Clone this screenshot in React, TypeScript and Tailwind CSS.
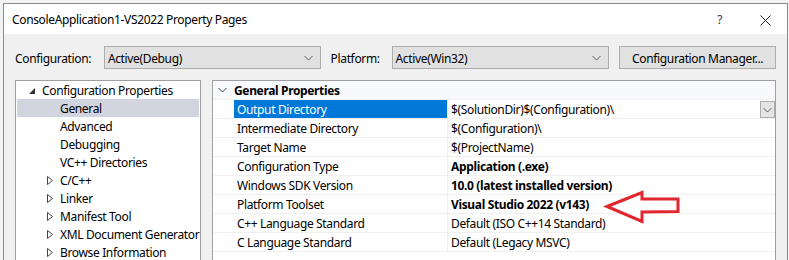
import React from "react";

const treeItems: { label: string; level: number; arrow?: "open" | "closed"; selected?: boolean }[] = [
  { label: "Configuration Properties", level: 0, arrow: "open" },
  { label: "General", level: 1, selected: true },
  { label: "Advanced", level: 1 },
  { label: "Debugging", level: 1 },
  { label: "VC++ Directories", level: 1 },
  { label: "C/C++", level: 1, arrow: "closed" },
  { label: "Linker", level: 1, arrow: "closed" },
  { label: "Manifest Tool", level: 1, arrow: "closed" },
  { label: "XML Document Generator", level: 1, arrow: "closed" },
  { label: "Browse Information", level: 1, arrow: "closed" },
];

const props: { name: string; value: string; bold?: boolean; selected?: boolean }[] = [
  { name: "Output Directory", value: "$(SolutionDir)$(Configuration)\\", selected: true },
  { name: "Intermediate Directory", value: "$(Configuration)\\" },
  { name: "Target Name", value: "$(ProjectName)" },
  { name: "Configuration Type", value: "Application (.exe)", bold: true },
  { name: "Windows SDK Version", value: "10.0 (latest installed version)", bold: true },
  { name: "Platform Toolset", value: "Visual Studio 2022 (v143)", bold: true },
  { name: "C++ Language Standard", value: "Default (ISO C++14 Standard)" },
  { name: "C Language Standard", value: "Default (Legacy MSVC)" },
];

const Chevron = ({ className = "" }: { className?: string }) => (
  <svg width="9" height="6" viewBox="0 0 9 6" className={className}>
    <path d="M0.5 1 L4.5 5 L8.5 1" fill="none" stroke="currentColor" strokeWidth="1" />
  </svg>
);

const Combo = ({ text, width }: { text: string; width: string }) => (
  <div className={`${width} h-[23px] bg-[#e1e1e1] border border-[#adadad] flex items-center pl-[3px] pr-[7px]`}>
    <span className="flex-1 pt-[2px]">{text}</span>
    <Chevron className="text-[#606060]" />
  </div>
);

const App = () => {
  return (
    <div
      className="w-[789px] h-[260px] overflow-hidden bg-[#f3f3f3] flex items-start text-[12px] tracking-[-0.35px] text-black relative"
      style={{ fontFamily: '"Segoe UI", "Noto Sans", sans-serif' }}
    >
      <div className="w-[3px] shrink-0" />
      <div className="mt-[3px] w-[785px] shrink-0 border-l border-t border-r border-[#8a8a8a] flex flex-col">
        <div className="h-[30px] shrink-0 bg-white flex items-center pl-[8px] pr-[16px] pt-[2px]">
          <span className="flex-1">ConsoleApplication1-VS2022 Property Pages</span>
          <span className="mr-[38px] text-[#333]">?</span>
          <svg width="11" height="11" viewBox="0 0 11 11">
            <path d="M0.5 0.5 L10.5 10.5 M10.5 0.5 L0.5 10.5" stroke="#222" strokeWidth="1" />
          </svg>
        </div>
        <div className="bg-[#f0f0f0] px-[11px] pt-[12px] flex flex-col">
          <div className="flex items-center h-[23px] shrink-0">
            <span className="w-[89px] pt-[2px]">Configuration:</span>
            <Combo text="Active(Debug)" width="w-[217px]" />
            <span className="ml-[10px] w-[61px] pt-[2px]">Platform:</span>
            <Combo text="Active(Win32)" width="w-[218px]" />
            <div className="ml-[10px] w-[157px] h-[23px] pt-[2px] bg-[#e1e1e1] border border-[#adadad] flex items-center justify-center">
              Configuration Manager...
            </div>
          </div>
          <div className="flex gap-[11px] mt-[11px]">
            <div className="w-[186px] h-[200px] bg-white border border-[#a0a0a0] flex flex-col">
              {treeItems.map((t) => (
                <div
                  key={t.label}
                  className={`h-[18px] shrink-0 flex items-center mx-[1px] ${t.selected ? "bg-[#d2d5e0]" : ""}`}
                >
                  <span className={`${t.level === 0 ? "w-[25px] pl-[12px]" : "w-[43px] pl-[30px]"} shrink-0 flex items-center pt-[1px]`}>
                    {t.arrow === "open" && (
                      <svg width="6" height="6" viewBox="0 0 6 6">
                        <path d="M6 0 L6 6 L0 6 Z" fill="#333" />
                      </svg>
                    )}
                    {t.arrow === "closed" && (
                      <svg width="6" height="9" viewBox="0 0 6 9">
                        <path d="M0.5 0.5 L5.5 4.5 L0.5 8.5 Z" fill="none" stroke="#444" strokeWidth="1" />
                      </svg>
                    )}
                  </span>
                  <span className="whitespace-nowrap pt-[2px]">{t.label}</span>
                </div>
              ))}
            </div>
            <div className="flex-1 h-[200px] bg-white border border-[#a0a0a0] flex flex-col">
              <div className="h-[19px] shrink-0 flex items-center bg-[#f7f9fc] border-b border-[#f0f0f0]">
                <span className="w-[21px] pl-[5px] flex items-center">
                  <Chevron className="text-[#444]" />
                </span>
                <span className="font-bold pt-[2px]">General Properties</span>
              </div>
              {props.map((p) => (
                <div key={p.name} className="h-[19px] shrink-0 flex border-b border-[#f0f0f0]">
                  <span className="w-[21px]" />
                  <span
                    className={`w-[214px] pl-[3px] pt-[2px] flex items-center border-r border-[#f0f0f0] whitespace-nowrap ${
                      p.selected ? "bg-[#0078d7] text-white" : ""
                    }`}
                  >
                    {p.name}
                  </span>
                  <span className={`flex-1 pl-[3px] pt-[2px] flex items-center whitespace-nowrap ${p.bold ? "font-bold" : ""}`}>
                    {p.value}
                  </span>
                  {p.selected && (
                    <span className="w-[15px] h-[17px] mt-[1px] bg-[#e5e5e5] border border-[#adadad] flex items-center justify-center">
                      <Chevron className="text-[#606060]" />
                    </span>
                  )}
                </div>
              ))}
            </div>
          </div>
        </div>
      </div>
      <svg className="absolute left-[600px] top-[186px]" width="84" height="42" viewBox="0 0 84 42">
        <path
          d="M7 20.5 L42 6.5 L42 13 L78 13 L78 25.5 L42 26 L42 35.5 Z"
          fill="white"
          stroke="#e0262e"
          strokeWidth="3"
          strokeLinejoin="miter"
        />
      </svg>
    </div>
  );
};

export default App;
